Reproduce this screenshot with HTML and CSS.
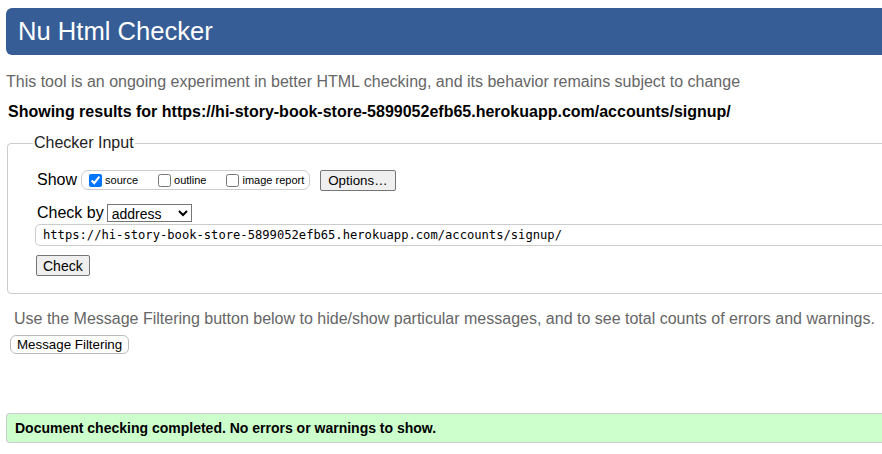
FILE: index.html
```html
<!DOCTYPE html>
<html lang="en">
<head>
<meta charset="utf-8">
<title>Nu Html Checker</title>
<link rel="stylesheet" href="styles.css">
</head>
<body>
<div class="page">
  <h1 class="title">Nu Html Checker</h1>
  <p class="intro">This tool is an ongoing experiment in better HTML checking, and its behavior remains subject to change</p>
  <p class="results">Showing results for https://hi-story-book-store-5899052efb65.herokuapp.com/accounts/signup/</p>
  <fieldset class="checker">
    <legend class="legend">Checker Input</legend>
    <div class="show-row">
      <span class="label">Show</span>
      <span class="opts">
        <label class="opt"><input type="checkbox" checked> source</label>
        <label class="opt"><input type="checkbox"> outline</label>
        <label class="opt"><input type="checkbox"> image report</label>
      </span>
      <button class="btn options" type="button">Options…</button>
    </div>
    <div class="by-row">
      <span class="label">Check by</span>
      <select class="sel"><option>address</option></select>
    </div>
    <input class="url" type="text" value="https://hi-story-book-store-5899052efb65.herokuapp.com/accounts/signup/">
    <button class="btn check" type="button">Check</button>
  </fieldset>
  <p class="hint">Use the Message Filtering button below to hide/show particular messages, and to see total counts of errors and warnings.</p>
  <button class="btn filter" type="button">Message Filtering</button>
  <div class="success">Document checking completed. No errors or warnings to show.</div>
</div>
</body>
</html>
```
FILE: styles.css
```css
html { overflow: hidden; }
body {
  margin: 0;
  font-family: "Liberation Sans", Arial, sans-serif;
  color: #000;
  background: #fff;
}
.page {
  width: 940px;
  padding: 8px 0 0 6px;
}
.title {
  margin: 0;
  height: 47px;
  line-height: 46px;
  padding-left: 12px;
  background: #365d95;
  color: #fff;
  font-size: 25.6px;
  font-weight: normal;
  border-radius: 6px 0 0 6px;
}
.intro {
  margin: 17px 0 0 0;
  font-size: 16px;
  line-height: 20px;
  color: #666;
}
.results {
  margin: 10px 0 0 2px;
  font-size: 16px;
  line-height: 20px;
  font-weight: bold;
}
.checker {
  margin: 12px 0 0 1px;
  padding: 13px 0 17px 29px;
  border: 1px solid #ccc;
  border-radius: 4px;
}
.legend {
  margin-left: -4px;
  padding: 0 1px;
  font-size: 16px;
  color: #222;
}
.show-row, .by-row {
  display: flex;
  align-items: center;
}
.show-row { margin-top: 4px; height: 22px; }
.by-row { margin-top: 13px; height: 18px; }
.label {
  font-size: 16px;
  margin-right: 4px;
}
.opts {
  display: flex;
  align-items: center;
  height: 18px;
  border: 1px solid #ccc;
  border-radius: 7px;
  padding: 0 5px 0 5px;
  font-size: 11px;
}
.opt {
  display: flex;
  align-items: center;
  margin-right: 18px;
}
.opt:last-child { margin-right: 0; }
.opt input {
  margin: 0 3px 0 2px;
  width: 13px;
  height: 13px;
}
.btn {
  font-family: "Liberation Sans", Arial, sans-serif;
  font-size: 14px;
  background: #efefef;
  border: 1px solid #767676;
  border-radius: 2px;
  color: #000;
  padding: 1px 6px;
}
.options { margin-left: 10px; height: 21px; padding: 1px 7px; font-size: 13.33px; }
.sel {
  font-family: "Liberation Sans", Arial, sans-serif;
  font-size: 14px;
  width: 85px;
  height: 18px;
  margin-left: -1px;
  border: 1px solid #767676;
  border-radius: 0;
  background: #fff;
  padding: 0;
}
.url {
  display: block;
  box-sizing: border-box;
  margin: 2px 0 0 -2px;
  width: 900px;
  height: 22px;
  border: 1px solid #ccc;
  border-radius: 5px;
  padding: 0 0 0 7px;
  font-family: "DejaVu Sans Mono", monospace;
  font-size: 12.15px;
  color: #000;
}
.check {
  display: block;
  margin: 9px 0 0 -1px;
  height: 21px;
}
.hint {
  margin: 15px 0 0 8px;
  font-size: 16px;
  line-height: 20px;
  color: #666;
}
.filter {
  display: block;
  margin: 6px 0 0 4px;
  height: 19px;
  padding: 0 6px;
  background: #fff;
  border: 1px solid #bbb;
  border-radius: 6px;
  font-size: 13.33px;
}
.success {
  margin-top: 59px;
  height: 30px;
  line-height: 28px;
  box-sizing: border-box;
  padding-left: 8px;
  background: #ccffcc;
  border: 1px solid #ccc;
  border-right: none;
  border-radius: 4px 0 0 4px;
  font-size: 14px;
  font-weight: bold;
}
```
